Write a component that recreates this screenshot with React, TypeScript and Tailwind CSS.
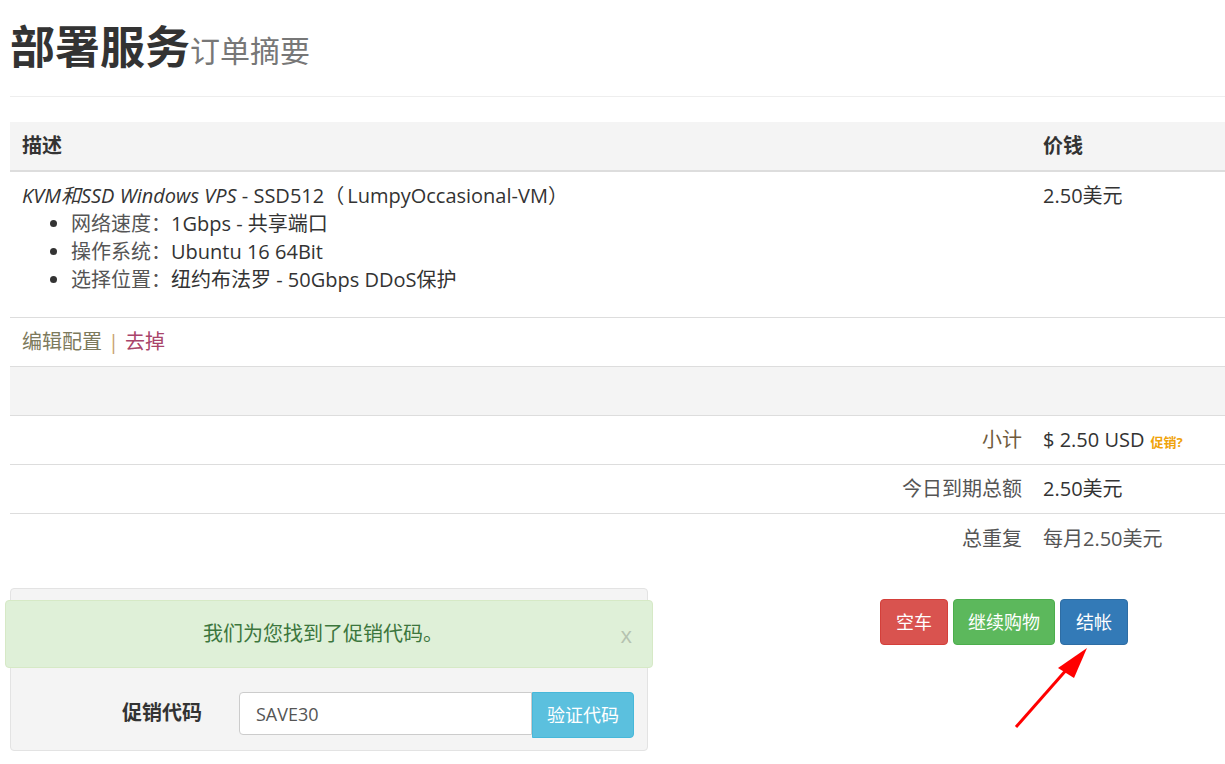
import React from 'react'

const font = { fontFamily: '"Open Sans", "Noto Sans CJK SC", sans-serif' }

export default function App() {
  const bullets = [
    { label: '网络速度：', value: '1Gbps - 共享端口' },
    { label: '操作系统：', value: 'Ubuntu 16 64Bit' },
    { label: '选择位置：', value: '纽约布法罗 - 50Gbps DDoS保护' },
  ]

  return (
    <div className="relative min-h-[764px] bg-white pl-[10px] text-[#333] overflow-hidden" style={font}>
      {/* Heading */}
      <div className="pt-[20px] pb-[22px] border-b border-[#eee]">
        <h1 className="flex items-end leading-[54px]">
          <span className="text-[45px] font-bold text-[#333]">部署服务</span>
          <span className="text-[30px] text-[#777] leading-[46px]">订单摘要</span>
        </h1>
      </div>

      {/* Cart table */}
      <div className="mt-[25px] text-[20px]">
        <div className="flex bg-[#f4f4f4] border-b-2 border-[#ddd] h-[50px] items-center font-bold">
          <div className="w-[1021px] pl-[12px]">描述</div>
          <div className="flex-1 pl-[12px]">价钱</div>
        </div>

        <div className="flex border-b border-[#ddd] pt-[10px] pb-[23px] leading-[28px]">
          <div className="w-[1021px] pl-[12px]">
            <div>
              <em>KVM和SSD Windows VPS</em> - SSD512<span className="tracking-[3px]">（</span>LumpyOccasional-VM<span className="tracking-[3px]">）</span>
            </div>
            <ul className="list-disc pl-[49px]">
              {bullets.map((b) => (
                <li key={b.label}>
                  <span className="text-[#555]">{b.label}</span>
                  {b.value}
                </li>
              ))}
            </ul>
          </div>
          <div className="flex-1 pl-[12px]">2.50美元</div>
        </div>

        <div className="flex items-center h-[49px] border-b border-[#ddd] pl-[12px]">
          <span className="text-[#7d7a5c]">编辑配置</span>
          <span className="text-[#c8a070] mx-[6px]">|</span>
          <span className="text-[#a9446a]">去掉</span>
        </div>

        <div className="h-[49px] bg-[#f4f4f4] border-b border-[#ddd]" />

        <div className="flex items-center h-[49px] border-b border-[#ddd]">
          <div className="w-[1021px] pr-[9px] text-right text-[#6f5a3c]">小计</div>
          <div className="flex-1 pl-[12px] flex items-baseline">
            $ 2.50 USD
            <span className="ml-[6px] text-[13px] font-bold text-[#f0a30a]">促销?</span>
          </div>
        </div>

        <div className="flex items-center h-[49px] border-b border-[#ddd]">
          <div className="w-[1021px] pr-[9px] text-right text-[#555]">今日到期总额</div>
          <div className="flex-1 pl-[12px]">2.50美元</div>
        </div>

        <div className="flex items-center h-[49px]">
          <div className="w-[1021px] pr-[9px] text-right text-[#555]">总重复</div>
          <div className="flex-1 pl-[12px] text-[#555]">每月2.50美元</div>
        </div>
      </div>

      {/* Promo + actions */}
      <div className="flex mt-[25px]">
        <div className="w-[638px] h-[163px] bg-[#f4f4f4] border border-[#e3e3e3] rounded-[4px] pt-[11px] px-[13px]">
          <div className="relative -mx-[19px] h-[68px] bg-[#dff0d8] border border-[#d6e9c6] rounded-[4px] flex items-center justify-center pr-[12px] text-[20px] text-[#3c763d]">
            我们为您找到了促销代码。
            <span className="absolute right-[20px] top-[17px] text-[22px] text-[#b5c2b0] font-normal">x</span>
          </div>
          <div className="flex items-start mt-[24px]">
            <div className="w-[215px] pr-[37px] pt-[6px] text-right font-bold text-[20px] text-[#333]">促销代码</div>
            <input
              readOnly
              value="SAVE30"
              className="w-[293px] h-[43px] border border-[#ccc] rounded-l-[4px] bg-white px-[16px] text-[18px] text-[#555] outline-none"
              style={font}
            />
            <button className="w-[102px] h-[46px] bg-[#5bc0de] border border-[#46b8da] rounded-r-[4px] text-white text-[18px]">
              验证代码
            </button>
          </div>
        </div>

        <div className="ml-[232px] mt-[11px] flex gap-[5px] h-[46px]">
          <button className="h-[46px] px-[15px] bg-[#d9534f] border border-[#d43f3a] rounded-[4px] text-white text-[18px]">
            空车
          </button>
          <button className="h-[46px] px-[14px] bg-[#5cb85c] border border-[#4cae4c] rounded-[4px] text-white text-[18px]">
            继续购物
          </button>
          <button className="h-[46px] px-[15px] bg-[#337ab7] border border-[#2e6da4] rounded-[4px] text-white text-[18px]">
            结帐
          </button>
        </div>
      </div>

      {/* Red annotation arrow */}
      <svg className="absolute left-0 top-0 pointer-events-none" width="1225" height="764">
        <line x1="1016" y1="727" x2="1068" y2="668" stroke="#ff0000" strokeWidth="3" />
        <polygon points="1087,648 1058,668 1074,678" fill="#ff0000" />
      </svg>
    </div>
  )
}
